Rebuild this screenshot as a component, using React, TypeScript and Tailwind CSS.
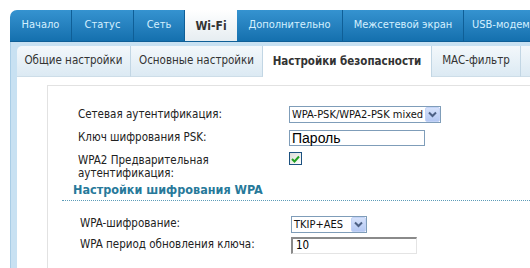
import React from "react";

const FONT = { fontFamily: "'DejaVu Sans Condensed', 'Liberation Sans', sans-serif" } as React.CSSProperties;

const tabs = [
  { t: "Начало", w: 62 },
  { t: "Статус", w: 62 },
  { t: "Сеть", w: 51 },
  { t: "Wi-Fi", w: 52, active: true },
  { t: "Дополнительно", w: 106 },
  { t: "Межсетевой экран", w: 121 },
];

const subtabs = [
  { t: "Общие настройки", w: 114 },
  { t: "Основные настройки", w: 132 },
  { t: "Настройки безопасности", w: 169, active: true },
  { t: "MAC-фильтр", w: 89 },
  { t: "", w: 40 },
];

function Chevron() {
  return (
    <svg width="9" height="7" viewBox="0 0 9 7">
      <path d="M1 1.5 L4.5 5 L8 1.5" fill="none" stroke="#4d6185" strokeWidth="2" />
    </svg>
  );
}

function Select({ text, w }: { text: string; w: number }) {
  return (
    <div
      className="flex items-center h-[17px] border border-[#7f9db9] bg-white"
      style={{ width: w }}
    >
      <span className="flex-1 pl-[2px] text-[11px] leading-none text-[#111] whitespace-nowrap overflow-hidden">
        {text}
      </span>
      <span className="w-[15px] h-[15px] rounded-[2px] bg-gradient-to-b from-[#d6e2fb] to-[#b4c8f3] border border-[#c3d3f7] flex items-center justify-center">
        <Chevron />
      </span>
    </div>
  );
}

export default function App() {
  return (
    <div className="w-[530px] h-[268px] overflow-hidden bg-white pt-[10px] pl-[10px] flex flex-col" style={FONT}>
      {/* top tab bar */}
      <div className="flex h-[32px] shrink-0 rounded-tl-[7px] overflow-hidden bg-gradient-to-b from-[#3593d0] to-[#1470ae] border-b border-[#0f5f97]">
        {tabs.map((tab, i) => (
          <div
            key={i}
            className={
              tab.active
                ? "shrink-0 flex items-center justify-center bg-gradient-to-b from-white to-[#e6edf1] text-[#333] font-bold text-[12px]"
                : "shrink-0 flex items-center justify-center text-[#d4f0ff] text-[11px] border-r border-[#0f5f97] whitespace-nowrap"
            }
            style={{ width: tab.w }}
          >
            {tab.t}
          </div>
        ))}
        <div className="flex-1 min-w-0 flex items-center pl-[8px] text-[#d4f0ff] text-[11px] whitespace-nowrap overflow-hidden">
          USB-модем
        </div>
      </div>

      {/* panel */}
      <div className="flex-1 flex flex-col bg-[#c8e1f2] pl-[6px] pt-[4px] border-l border-[#a9cde6]">
        <div className="flex h-[31px] shrink-0 rounded-tl-[5px] overflow-hidden bg-gradient-to-b from-[#f3f8fb] to-[#dbe9f3]">
          {subtabs.map((s, i) => (
            <div
              key={i}
              className={
                s.active
                  ? "shrink-0 flex items-center justify-center bg-white text-[#333] font-bold text-[11.5px] border-r border-[#c2d6e4]"
                  : "shrink-0 flex items-center justify-center text-[#333] text-[11.5px] border-r border-[#c2d6e4] border-b border-b-[#cddde8]"
              }
              style={{ width: s.w }}
            >
              {s.t}
            </div>
          ))}
          <div className="flex-1 border-b border-[#cddde8]" />
        </div>

        <div className="flex-1 bg-white">
          <div className="mt-[8px] ml-[30px] h-full border-t border-l border-[#e2e2e2] pt-[20px] text-[11.5px] text-[#222]">
            {/* group 1 */}
            <div className="pl-[30px] grid grid-cols-[211px_1fr]">
              <div className="h-[17px] flex items-center">Сетевая аутентификация:</div>
              <div className="h-[17px]">
                <Select text="WPA-PSK/WPA2-PSK mixed" w={152} />
              </div>

              <div className="mt-[7px] h-[16px] flex items-center">Ключ шифрования PSK:</div>
              <div className="mt-[7px] h-[16px]">
                <div className="w-[136px] h-[16px] border border-[#7f9db9] bg-white flex items-center pl-[2px] text-[14px] leading-none text-black" style={{ fontFamily: "'Liberation Sans', Arial, sans-serif" }}>
                  Пароль
                </div>
              </div>

              <div className="mt-[6px] pt-[2px] leading-[13px] h-[28px]">
                WPA2 Предварительная
                <br />
                аутентификация:
              </div>
              <div className="mt-[6px]">
                <div className="w-[13px] h-[13px] border border-[#1c5180] bg-gradient-to-br from-[#dcdcd7] to-white flex items-center justify-center">
                  <svg width="9" height="8" viewBox="0 0 9 8">
                    <path d="M1 4 L3.5 6.5 L8 1.5" fill="none" stroke="#21a121" strokeWidth="2" />
                  </svg>
                </div>
              </div>
            </div>

            {/* heading */}
            <div className="ml-[14px] h-[21px] flex items-center pl-[11px] border-b border-dotted border-[#5d9cb8] text-[12.5px] font-bold text-[#27799a]">
              Настройки шифрования WPA
            </div>

            {/* group 2 */}
            <div className="pl-[32px] grid grid-cols-[211px_1fr] mt-[15px]">
              <div className="h-[16px] flex items-center">WPA-шифрование:</div>
              <div className="h-[16px]">
                <Select text="TKIP+AES" w={76} />
              </div>

              <div className="mt-[5px] h-[16px] flex items-center">WPA период обновления ключа:</div>
              <div className="mt-[5px] h-[16px]">
                <div className="w-[126px] h-[17px] border-t-2 border-l-2 border-r border-b border-t-[#8a8a8a] border-l-[#8a8a8a] border-r-[#e4e4e4] border-b-[#e4e4e4] bg-white flex items-center pl-[3px] text-[11.5px] leading-none text-black">
                  10
                </div>
              </div>
            </div>
          </div>
        </div>
      </div>
    </div>
  );
}
